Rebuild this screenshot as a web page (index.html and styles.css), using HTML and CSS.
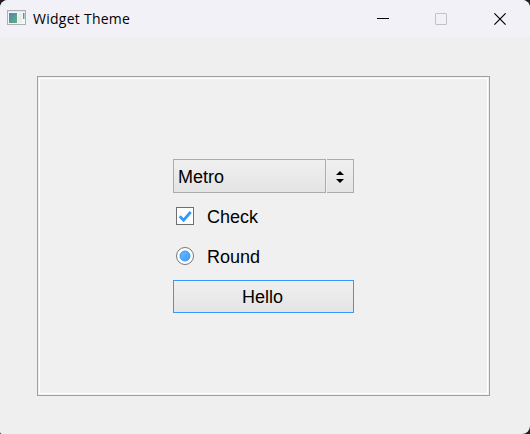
FILE: index.html
```html
<!DOCTYPE html>
<html lang="en">
<head>
<meta charset="utf-8">
<title>Widget Theme</title>
<link rel="stylesheet" href="styles.css">
</head>
<body>
<div class="window">
  <header class="titlebar">
    <svg class="app-icon" width="20" height="17" viewBox="0 0 20 17">
      <defs>
        <linearGradient id="pane" x1="0" y1="0" x2="1" y2="1"><stop offset="0" stop-color="#4f86b4"/><stop offset="1" stop-color="#62b07c"/></linearGradient>
      </defs>
      <rect x=".5" y=".5" width="18" height="14" fill="#f5f6f6" stroke="#a9b0b7"/>
      <path d="M1 1.5h17" stroke="#e2e5e8"/>
      <rect x="2" y="3" width="8" height="10" fill="url(#pane)"/>
      <rect x="11" y="3" width="4" height="10" fill="#eceeed"/>
      <rect x="16" y="3" width="1.5" height="6" fill="url(#pane)"/>
    </svg>
    <h1 class="title">Widget Theme</h1>
    <div class="controls">
      <svg width="12" height="12" viewBox="0 0 12 12"><path d="M0 5.5h12" stroke="#000"/></svg>
      <svg width="12" height="12" viewBox="0 0 12 12"><rect x=".5" y=".5" width="11" height="11" rx=".5" fill="none" stroke="#c2c1c8"/></svg>
      <svg class="close" width="12" height="12" viewBox="0 0 12 12"><path d="M.4.4l11.2 11.2M11.6.4L.4 11.6" stroke="#000" stroke-width="1.2"/></svg>
    </div>
  </header>
  <main class="client">
    <section class="frame">
      <div class="form">
        <div class="combo">
          <div class="combo-value">Metro</div>
          <div class="combo-arrows">
            <svg width="8" height="14" viewBox="0 0 8 14"><path d="M0 5L4 1l4 4zM0 9l4 4 4-4z" fill="#000"/></svg>
          </div>
        </div>
        <div class="option">
          <svg width="18" height="18" viewBox="0 0 18 18"><rect x=".5" y=".5" width="17" height="17" fill="#fff" stroke="#6e6e6e"/><path d="M3.7 9.2l3.9 4L14.7 5" fill="none" stroke="#3399ff" stroke-width="2.8"/></svg>
          <span>Check</span>
        </div>
        <div class="option">
          <svg width="18" height="18" viewBox="0 0 18 18">
            <defs><linearGradient id="dot" x1="0" y1="0" x2="1" y2="1"><stop offset="0" stop-color="#70b8ff"/><stop offset="1" stop-color="#3b9cff"/></linearGradient></defs>
            <circle cx="9" cy="9" r="8.5" fill="#fff" stroke="#777"/><circle cx="9" cy="9" r="5" fill="url(#dot)" stroke="#3399ff"/></svg>
          <span>Round</span>
        </div>
        <div class="button">Hello</div>
      </div>
    </section>
  </main>
</div>
</body>
</html>
```
FILE: styles.css
```css
* { box-sizing: border-box; }

body {
  margin: 0;
  background: #202024;
}

.window {
  width: 530px;
  height: 434px;
  overflow: hidden;
  border-radius: 8px 8px 8px 2px;
  background: #efefef;
}

.titlebar {
  display: flex;
  align-items: center;
  height: 37px;
  padding: 0 24px 0 7px;
  background: #f2f1f8;
}

.title {
  margin: 0 0 0 6px;
  font: 400 14px/20px "Open Sans", "Noto Sans", sans-serif;
  letter-spacing: 0.26px;
  color: #000;
}

.controls {
  display: flex;
  gap: 46px;
  margin-left: auto;
}

.close { margin-left: 1px; }

.client {
  height: 397px;
  padding: 39px 40px 38px 37px;
}

.frame {
  height: 320px;
  padding: 82px 135px 0;
  border: 1px solid #a0a0a0;
  background: #f0f0f0;
  box-shadow: inset 0 0 0 1px #f0f0f0, inset 0 0 0 2px #fff;
}

.form {
  width: 181px;
  font: 18px/20px "Liberation Sans", Arial, sans-serif;
  color: #000;
}

.combo {
  display: flex;
  gap: 1px;
  height: 34px;
  margin-bottom: 3px;
}

.combo-value,
.combo-arrows {
  display: flex;
  align-items: center;
  border: 1px solid #acacac;
  background: linear-gradient(#f0f0f0, #e4e4e4);
}

.combo-value {
  width: 153px;
  padding: 2px 0 0 4px;
}

.combo-arrows {
  width: 27px;
  justify-content: center;
  padding-top: 2px;
  border-left: 0;
}

.option {
  display: flex;
  align-items: center;
  gap: 13px;
  height: 40px;
  padding-left: 3px;
}

.option span { margin-top: 2px; }

.option + .button { margin-top: 4px; }

.button {
  display: flex;
  align-items: center;
  justify-content: center;
  height: 33px;
  padding: 1px 2px 0 0;
  border: 1px solid #3399ff;
  background: linear-gradient(#f0f0f0, #e4e4e4);
}
```
